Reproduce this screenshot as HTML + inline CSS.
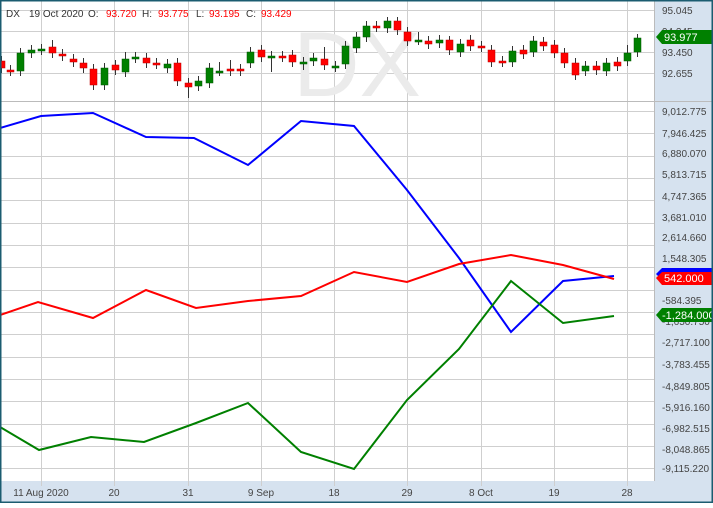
<!DOCTYPE html><html><head><style>body{margin:0;width:713px;height:503px;overflow:hidden;background:#fff;font-family:"Liberation Sans",sans-serif}</style></head><body>
<svg width="713" height="503" xmlns="http://www.w3.org/2000/svg" font-family="Liberation Sans, sans-serif" font-size="10">
<rect x="654" y="0" width="59" height="503" fill="#d6e2ef"/>
<rect x="0" y="481" width="713" height="22" fill="#d6e2ef"/>
<g stroke="#cfcfcf" stroke-width="1">
<line x1="0" y1="10.5" x2="654" y2="10.5"/><line x1="0" y1="31.5" x2="654" y2="31.5"/><line x1="0" y1="52.5" x2="654" y2="52.5"/><line x1="0" y1="73.5" x2="654" y2="73.5"/>
<line x1="41.5" y1="0" x2="41.5" y2="486"/><line x1="114.5" y1="0" x2="114.5" y2="486"/><line x1="188.5" y1="0" x2="188.5" y2="486"/><line x1="261.5" y1="0" x2="261.5" y2="486"/><line x1="334.5" y1="0" x2="334.5" y2="486"/><line x1="407.5" y1="0" x2="407.5" y2="486"/><line x1="481.5" y1="0" x2="481.5" y2="486"/><line x1="554.5" y1="0" x2="554.5" y2="486"/><line x1="627.5" y1="0" x2="627.5" y2="486"/>
<path d="M0 111.5H654M0 133.5H654M0 156.5H654M0 178.5H654M0 200.5H654M0 223.5H654M0 245.5H654M0 267.5H654M0 290.5H654M0 312.5H654M0 334.5H654M0 357.5H654M0 379.5H654M0 401.5H654M0 424.5H654M0 446.5H654M0 468.5H654"/>
</g>
<line x1="0" y1="101.5" x2="713" y2="101.5" stroke="#bbb"/>
<line x1="654.5" y1="0" x2="654.5" y2="481" stroke="#bbb"/>
<text x="357" y="96" font-size="92" fill="#ebebeb" text-anchor="middle">DX</text>
<g stroke="#333" stroke-width="1">
<path d="M1.5 56V73M10.5 65V76M20.5 48V76M31.5 45V58M41.5 44V55M52.5 40V58M62.5 49V61M73.5 54V67M83.5 58V73M93.5 64V90M104.5 63V90M115.5 60V75M125.5 52V77M135.5 52V63M146.5 53V68M156.5 58V69M167.5 59V73M177.5 58V86M188.5 78V98M198.5 76V91M209.5 63V88M219.5 62V76M230.5 60V76M240.5 64V76M250.5 47V68M261.5 45V62M271.5 51V72M282.5 51V62M292.5 50V67M303.5 57V70M313.5 53V66M324.5 47V70M335.5 61V72M345.5 41V69M356.5 32V53M366.5 21V42M376.5 21V32M387.5 17V33M397.5 17V35M407.5 27V46M418.5 32V45M428.5 36V49M439.5 35V48M449.5 36V55M460.5 39V57M470.5 35V51M481.5 41V52M491.5 45V67M502.5 56V67M512.5 46V67M523.5 45V59M533.5 36V57M543.5 37V51M554.5 40V58M564.5 48V68M575.5 58V80M585.5 61V76M596.5 61V75M606.5 58V76M617.5 57V71M627.5 45V66M637.5 34V57"/>
</g>
<g fill="#ff0000" stroke="#b00" stroke-width="0.5">
<rect x="-2" y="61" width="7" height="7"/><rect x="7" y="70" width="7" height="2"/><rect x="49" y="47" width="7" height="6"/><rect x="59" y="54" width="7" height="2"/><rect x="70" y="59" width="7" height="3"/><rect x="80" y="63" width="7" height="5"/><rect x="90" y="69" width="7" height="16"/><rect x="112" y="65" width="7" height="5"/><rect x="143" y="58" width="7" height="5"/><rect x="153" y="63" width="7" height="2"/><rect x="174" y="63" width="7" height="18"/><rect x="185" y="83" width="7" height="4"/><rect x="227" y="69" width="7" height="2"/><rect x="237" y="69" width="7" height="2"/><rect x="258" y="50" width="7" height="7"/><rect x="279" y="56" width="7" height="2"/><rect x="289" y="55" width="7" height="7"/><rect x="321" y="59" width="7" height="6"/><rect x="373" y="26" width="7" height="2"/><rect x="394" y="21" width="7" height="9"/><rect x="404" y="32" width="7" height="9"/><rect x="425" y="41" width="7" height="3"/><rect x="446" y="40" width="7" height="10"/><rect x="467" y="40" width="7" height="6"/><rect x="478" y="46" width="7" height="2"/><rect x="488" y="50" width="7" height="12"/><rect x="499" y="61" width="7" height="2"/><rect x="520" y="50" width="7" height="4"/><rect x="540" y="42" width="7" height="4"/><rect x="551" y="45" width="7" height="8"/><rect x="561" y="53" width="7" height="10"/><rect x="572" y="63" width="7" height="12"/><rect x="593" y="66" width="7" height="4"/><rect x="614" y="62" width="7" height="4"/>
</g>
<g fill="#008000" stroke="#050" stroke-width="0.5">
<rect x="17" y="53" width="7" height="18"/><rect x="28" y="50" width="7" height="3"/><rect x="38" y="49" width="7" height="2"/><rect x="101" y="68" width="7" height="17"/><rect x="122" y="59" width="7" height="13"/><rect x="132" y="57" width="7" height="2"/><rect x="164" y="64" width="7" height="4"/><rect x="195" y="81" width="7" height="5"/><rect x="206" y="68" width="7" height="15"/><rect x="216" y="71" width="7" height="2"/><rect x="247" y="52" width="7" height="11"/><rect x="268" y="56" width="7" height="2"/><rect x="300" y="62" width="7" height="2"/><rect x="310" y="58" width="7" height="3"/><rect x="332" y="66" width="7" height="2"/><rect x="342" y="46" width="7" height="18"/><rect x="353" y="37" width="7" height="11"/><rect x="363" y="26" width="7" height="11"/><rect x="384" y="21" width="7" height="7"/><rect x="415" y="40" width="7" height="2"/><rect x="436" y="40" width="7" height="3"/><rect x="457" y="44" width="7" height="8"/><rect x="509" y="51" width="7" height="11"/><rect x="530" y="41" width="7" height="11"/><rect x="582" y="66" width="7" height="5"/><rect x="603" y="63" width="7" height="8"/><rect x="624" y="53" width="7" height="8"/><rect x="634" y="38" width="7" height="14"/>
</g>
<g fill="none" stroke-width="2">
<polyline stroke="#0000ff" points="0,128 41,116 93,113 146,137 194,138 248,165 301,121 354,126 407,190 459,258 511,332 563,281 614,276"/>
<polyline stroke="#ff0000" points="0,315 38,302 93,318 146,290 196,308 248,301 301,296 354,272 407,282 459,264 511,255 563,265 614,279"/>
<polyline stroke="#008000" points="0,427 39,450 91,437 144,442 196,423 248,403 301,452 354,469 407,400 459,349 511,281 563,323 614,316"/>
</g>
<g fill="#444" font-size="10">
<text x="662" y="14">95.045</text><text x="662" y="35">94.245</text><text x="662" y="56">93.450</text><text x="662" y="77">92.655</text>
<text x="662" y="115">9,012.775</text><text x="662" y="137">7,946.425</text><text x="662" y="157">6,880.070</text><text x="662" y="178">5,813.715</text><text x="662" y="200">4,747.365</text><text x="662" y="221">3,681.010</text><text x="662" y="241">2,614.660</text><text x="662" y="262">1,548.305</text><text x="662" y="304">-584.395</text><text x="662" y="325">-1,650.750</text><text x="662" y="346">-2,717.100</text><text x="662" y="368">-3,783.455</text><text x="662" y="390">-4,849.805</text><text x="662" y="411">-5,916.160</text><text x="662" y="432">-6,982.515</text><text x="662" y="453">-8,048.865</text><text x="662" y="472">-9,115.220</text>
<text x="41" y="496" text-anchor="middle">11 Aug 2020</text><text x="114" y="496" text-anchor="middle">20</text><text x="188" y="496" text-anchor="middle">31</text><text x="261" y="496" text-anchor="middle">9 Sep</text><text x="334" y="496" text-anchor="middle">18</text><text x="407" y="496" text-anchor="middle">29</text><text x="481" y="496" text-anchor="middle">8 Oct</text><text x="554" y="496" text-anchor="middle">19</text><text x="627" y="496" text-anchor="middle">28</text>
</g>
<path d="M662 30H713V44H662L656 37Z" fill="#008000"/><text x="664" y="41" fill="#fff" font-size="11">93.977</text>
<path d="M662 268H713V280H662L656 274Z" fill="#0000ff"/>
<path d="M662 272H713V285H662L656 278Z" fill="#ff0000"/><text x="664" y="282" fill="#fff" font-size="11">542.000</text>
<path d="M662 308H713V322H662L656 315Z" fill="#008000"/><text x="662" y="319" fill="#fff" font-size="11">-1,284.000</text>
<g font-size="10"><text x="6" y="17" fill="#333">DX</text><text x="29" y="17" fill="#333">19 Oct 2020</text><text x="88" y="17" fill="#333">O:</text><text x="106" y="17" fill="#f00">93.720</text><text x="142" y="17" fill="#333">H:</text><text x="158" y="17" fill="#f00">93.775</text><text x="196" y="17" fill="#333">L:</text><text x="209" y="17" fill="#f00">93.195</text><text x="246" y="17" fill="#333">C:</text><text x="261" y="17" fill="#f00">93.429</text></g>
<rect x="0.75" y="0.75" width="711.5" height="501.5" fill="none" stroke="#1b5c70" stroke-width="1.5"/>
</svg></body></html>
